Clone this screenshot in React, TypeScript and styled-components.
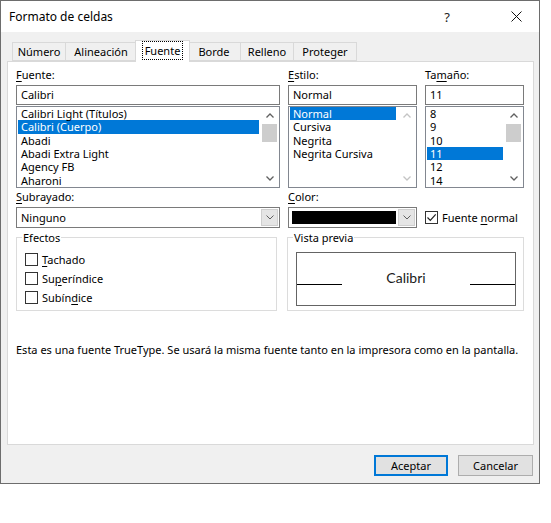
import React from 'react';
import styled, { createGlobalStyle } from 'styled-components';

const Global = createGlobalStyle`
  html, body { margin: 0; padding: 0; background: #fff; }
  body {
    font-family: "Noto Sans", "DejaVu Sans", sans-serif;
    font-size: 11px;
    color: #000;
  }
  * { box-sizing: border-box; }
`;

const Dialog = styled.div`
  width: 540px;
  height: 484px;
  border: 1px solid #6d6d6d;
  background: #f0f0f0;
  display: flex;
  flex-direction: column;
`;

const TitleBar = styled.div`
  height: 31px;
  background: #fff;
  display: flex;
  align-items: center;
  padding-left: 8px;
  font-size: 12px;
`;

const Title = styled.div`
  flex: 1;
`;

const TitleButton = styled.div<{ $w: number }>`
  width: ${(p) => p.$w}px;
  height: 31px;
  display: flex;
  align-items: center;
  justify-content: center;
  font-size: 13px;
  color: #222;
`;

const TabRow = styled.div`
  display: flex;
  align-items: flex-end;
  height: 29px;
  padding-left: 11px;
  position: relative;
  z-index: 1;
`;

const Tab = styled.div<{ $w: number; $active?: boolean }>`
  width: ${(p) => p.$w}px;
  height: ${(p) => (p.$active ? 22 : 19)}px;
  margin: 0 ${(p) => (p.$active ? -2 : 0)}px ${(p) => (p.$active ? -1 : 0)}px;
  border: 1px solid #d9d9d9;
  border-bottom: ${(p) => (p.$active ? 'none' : '1px solid #d9d9d9')};
  border-left: ${(p) => (p.$active ? '1px solid #d9d9d9' : 'none')};
  background: ${(p) => (p.$active ? '#fff' : '#f0f0f0')};
  display: flex;
  align-items: center;
  justify-content: center;
  padding-bottom: ${(p) => (p.$active ? 2 : 0)}px;
  position: relative;
  z-index: ${(p) => (p.$active ? 2 : 1)};
  &:first-child { border-left: 1px solid #d9d9d9; }
`;

const FocusText = styled.span`
  outline: 1px dotted #000;
  outline-offset: 1px;
  padding: 0 1px;
`;

const Panel = styled.div`
  margin: 0 5px 0 6px;
  height: 384px;
  background: #fff;
  border: 1px solid #d9d9d9;
  padding: 5px 8px 0 8px;
  display: flex;
  flex-direction: column;
`;

const FieldGrid = styled.div<{ $top?: number }>`
  display: grid;
  grid-template-columns: 264px 129px 99px;
  column-gap: 8px;
  margin-top: ${(p) => p.$top ?? 0}px;
`;

const Field = styled.div`
  display: flex;
  flex-direction: column;
`;

const Label = styled.div`
  height: 15px;
  line-height: 15px;
  margin-bottom: 3px;
`;

const Key = styled.span`
  text-decoration: underline;
  text-underline-offset: 2px;
`;

const TextBox = styled.div`
  height: 20px;
  border: 1px solid #7a7a7a;
  padding-left: 4px;
  line-height: 18px;
  background: #fff;
`;

const ListBox = styled.div`
  height: 82px;
  margin-top: 1px;
  border: 1px solid #828790;
  display: flex;
  background: #fff;
`;

const Items = styled.div`
  flex: 1;
  overflow: hidden;
  padding-right: 2px;
`;

const Item = styled.div<{ $sel?: boolean }>`
  height: 13.33px;
  line-height: 13.33px;
  padding-left: 3px;
  margin-left: 1px;
  white-space: nowrap;
  background: ${(p) => (p.$sel ? '#0078d7' : 'transparent')};
  color: ${(p) => (p.$sel ? '#fff' : '#000')};
`;

const ScrollBar = styled.div`
  width: 17px;
  display: flex;
  flex-direction: column;
  background: #fff;
  margin-right: 1px;
`;

const ScrollArrow = styled.div`
  height: 17px;
  display: flex;
  align-items: center;
  justify-content: center;
`;

const Track = styled.div`
  flex: 1;
  padding: 0 1px;
`;

const Thumb = styled.div<{ $top: number }>`
  margin-top: ${(p) => p.$top}px;
  height: 18px;
  background: #cdcdcd;
`;

const Combo = styled.div`
  height: 21px;
  border: 1px solid #7a7a7a;
  background: #fff;
  display: flex;
  align-items: stretch;
  padding: 1px;
`;

const ComboText = styled.div`
  flex: 1;
  padding-left: 3px;
  line-height: 17px;
`;

const ColorFill = styled.div`
  flex: 1;
  margin: 2px;
  background: #000;
`;

const DropButton = styled.div`
  width: 17px;
  background: #e5e5e5;
  border: 1px solid #cfcfcf;
  display: flex;
  align-items: center;
  justify-content: center;
`;

const CheckRow = styled.label<{ $h?: number }>`
  display: flex;
  align-items: center;
  height: ${(p) => p.$h ?? 19}px;
`;

const Box = styled.span`
  width: 13px;
  height: 13px;
  border: 1px solid #333;
  background: #fff;
  display: inline-flex;
  align-items: center;
  justify-content: center;
  margin-right: 4px;
  flex: none;
`;

const Groups = styled.div`
  display: grid;
  grid-template-columns: 261px 237px;
  column-gap: 10px;
  margin-top: 2px;
`;

const Group = styled.fieldset`
  margin: 0;
  padding: 0;
  border: 1px solid #dcdcdc;
  min-width: 0;
  height: 81px;
`;

const Legend = styled.legend`
  margin-left: 5px;
  padding: 0 1px;
  line-height: 15px;
`;

const CheckList = styled.div`
  padding: 5px 0 0 8px;
`;

const PreviewBox = styled.div`
  margin: 7px 7px 0 8px;
  height: 54px;
  border: 1px solid #646464;
  display: flex;
  align-items: center;
`;

const PreviewLine = styled.div`
  width: 45px;
  height: 1px;
  background: #000;
  align-self: flex-end;
  margin-bottom: 20px;
`;

const PreviewText = styled.div`
  flex: 1;
  text-align: center;
  font-family: Lato, "Noto Sans", sans-serif;
  font-weight: 400;
  font-size: 14px;
  color: #1a1a1a;
  padding-bottom: 3px;
`;

const Note = styled.div`
  margin-top: 31px;
  line-height: 15px;
`;

const ButtonRow = styled.div`
  display: flex;
  justify-content: flex-end;
  gap: 10px;
  padding: 10px 6px 0 0;
`;

const Button = styled.div<{ $default?: boolean }>`
  width: ${(p) => (p.$default ? 74 : 75)}px;
  height: 21px;
  background: #e1e1e1;
  border: ${(p) => (p.$default ? '2px solid #0078d7' : '1px solid #adadad')};
  display: flex;
  align-items: center;
  justify-content: center;
`;

const Chevron = ({ up, color = '#606060' }: { up?: boolean; color?: string }) => (
  <svg width="8" height="5" viewBox="0 0 8 5">
    <path
      d={up ? 'M0.5 4.5 L4 1 L7.5 4.5' : 'M0.5 0.5 L4 4 L7.5 0.5'}
      fill="none"
      stroke={color}
      strokeWidth="1.3"
    />
  </svg>
);

const SmallChevron = () => (
  <svg width="8" height="5" viewBox="0 0 8 5">
    <path d="M0.5 0.5 L4 4 L7.5 0.5" fill="none" stroke="#606060" strokeWidth="1" />
  </svg>
);

const CloseIcon = () => (
  <svg width="11" height="11" viewBox="0 0 11 11">
    <path d="M0.5 0.5 L10.5 10.5 M10.5 0.5 L0.5 10.5" stroke="#111" strokeWidth="1" />
  </svg>
);

const CheckMark = () => (
  <svg width="11" height="11" viewBox="0 0 11 11">
    <path d="M1.5 5.5 L4.3 8.3 L9.7 2.3" fill="none" stroke="#222" strokeWidth="1.2" />
  </svg>
);

const Scroll = ({ thumb, disabled }: { thumb?: number; disabled?: boolean }) => (
  <ScrollBar>
    <ScrollArrow>
      <Chevron up color={disabled ? '#c4c4c4' : '#606060'} />
    </ScrollArrow>
    <Track>{thumb !== undefined && <Thumb $top={thumb} />}</Track>
    <ScrollArrow>
      <Chevron color={disabled ? '#c4c4c4' : '#606060'} />
    </ScrollArrow>
  </ScrollBar>
);

const tabs = [
  { label: 'Número', w: 54 },
  { label: 'Alineación', w: 71 },
  { label: 'Fuente', w: 55, active: true },
  { label: 'Borde', w: 53 },
  { label: 'Relleno', w: 53 },
  { label: 'Proteger', w: 63 },
];

const fonts = ['Calibri Light (Títulos)', 'Calibri (Cuerpo)', 'Abadi', 'Abadi Extra Light', 'Agency FB', 'Aharoni'];
const styles = ['Normal', 'Cursiva', 'Negrita', 'Negrita Cursiva'];
const sizes = ['8', '9', '10', '11', '12', '14'];

export default function App() {
  return (
    <>
      <Global />
      <Dialog>
        <TitleBar>
          <Title>Formato de celdas</Title>
          <TitleButton $w={46}>?</TitleButton>
          <TitleButton $w={23} />
          <TitleButton $w={46}>
            <CloseIcon />
          </TitleButton>
        </TitleBar>
        <TabRow>
          {tabs.map((t) => (
            <Tab key={t.label} $w={t.w} $active={t.active}>
              {t.active ? <FocusText>{t.label}</FocusText> : t.label}
            </Tab>
          ))}
        </TabRow>
        <Panel>
          <FieldGrid>
            <Field>
              <Label>
                <Key>F</Key>uente:
              </Label>
              <TextBox>Calibri</TextBox>
              <ListBox>
                <Items>
                  {fonts.map((f, i) => (
                    <Item key={f} $sel={i === 1}>
                      {f}
                    </Item>
                  ))}
                </Items>
                <Scroll thumb={0} />
              </ListBox>
            </Field>
            <Field>
              <Label>
                <Key>E</Key>stilo:
              </Label>
              <TextBox>Normal</TextBox>
              <ListBox>
                <Items>
                  {styles.map((s, i) => (
                    <Item key={s} $sel={i === 0}>
                      {s}
                    </Item>
                  ))}
                </Items>
                <Scroll disabled />
              </ListBox>
            </Field>
            <Field>
              <Label>
                Ta<Key>m</Key>año:
              </Label>
              <TextBox>11</TextBox>
              <ListBox>
                <Items>
                  {sizes.map((s) => (
                    <Item key={s} $sel={s === '11'}>
                      {s}
                    </Item>
                  ))}
                </Items>
                <Scroll thumb={0} />
              </ListBox>
            </Field>
          </FieldGrid>
          <FieldGrid $top={1}>
            <Field>
              <Label>
                <Key>S</Key>ubrayado:
              </Label>
              <Combo>
                <ComboText>Ninguno</ComboText>
                <DropButton>
                  <SmallChevron />
                </DropButton>
              </Combo>
            </Field>
            <Field>
              <Label>
                <Key>C</Key>olor:
              </Label>
              <Combo>
                <ColorFill />
                <DropButton>
                  <SmallChevron />
                </DropButton>
              </Combo>
            </Field>
            <Field>
              <Label />
              <CheckRow $h={21}>
                <Box>
                  <CheckMark />
                </Box>
                Fuente&nbsp;<Key>n</Key>ormal
              </CheckRow>
            </Field>
          </FieldGrid>
          <Groups>
            <Group>
              <Legend>Efectos</Legend>
              <CheckList>
                <CheckRow>
                  <Box />
                  <span>
                    <Key>T</Key>achado
                  </span>
                </CheckRow>
                <CheckRow>
                  <Box />
                  <span>
                    Su<Key>p</Key>eríndice
                  </span>
                </CheckRow>
                <CheckRow>
                  <Box />
                  <span>
                    Subín<Key>d</Key>ice
                  </span>
                </CheckRow>
              </CheckList>
            </Group>
            <Group>
              <Legend>Vista previa</Legend>
              <PreviewBox>
                <PreviewLine />
                <PreviewText>Calibri</PreviewText>
                <PreviewLine />
              </PreviewBox>
            </Group>
          </Groups>
          <Note>
            Esta es una fuente TrueType. Se usará la misma fuente tanto en la impresora como en la pantalla.
          </Note>
        </Panel>
        <ButtonRow>
          <Button $default>Aceptar</Button>
          <Button>Cancelar</Button>
        </ButtonRow>
      </Dialog>
    </>
  );
}
